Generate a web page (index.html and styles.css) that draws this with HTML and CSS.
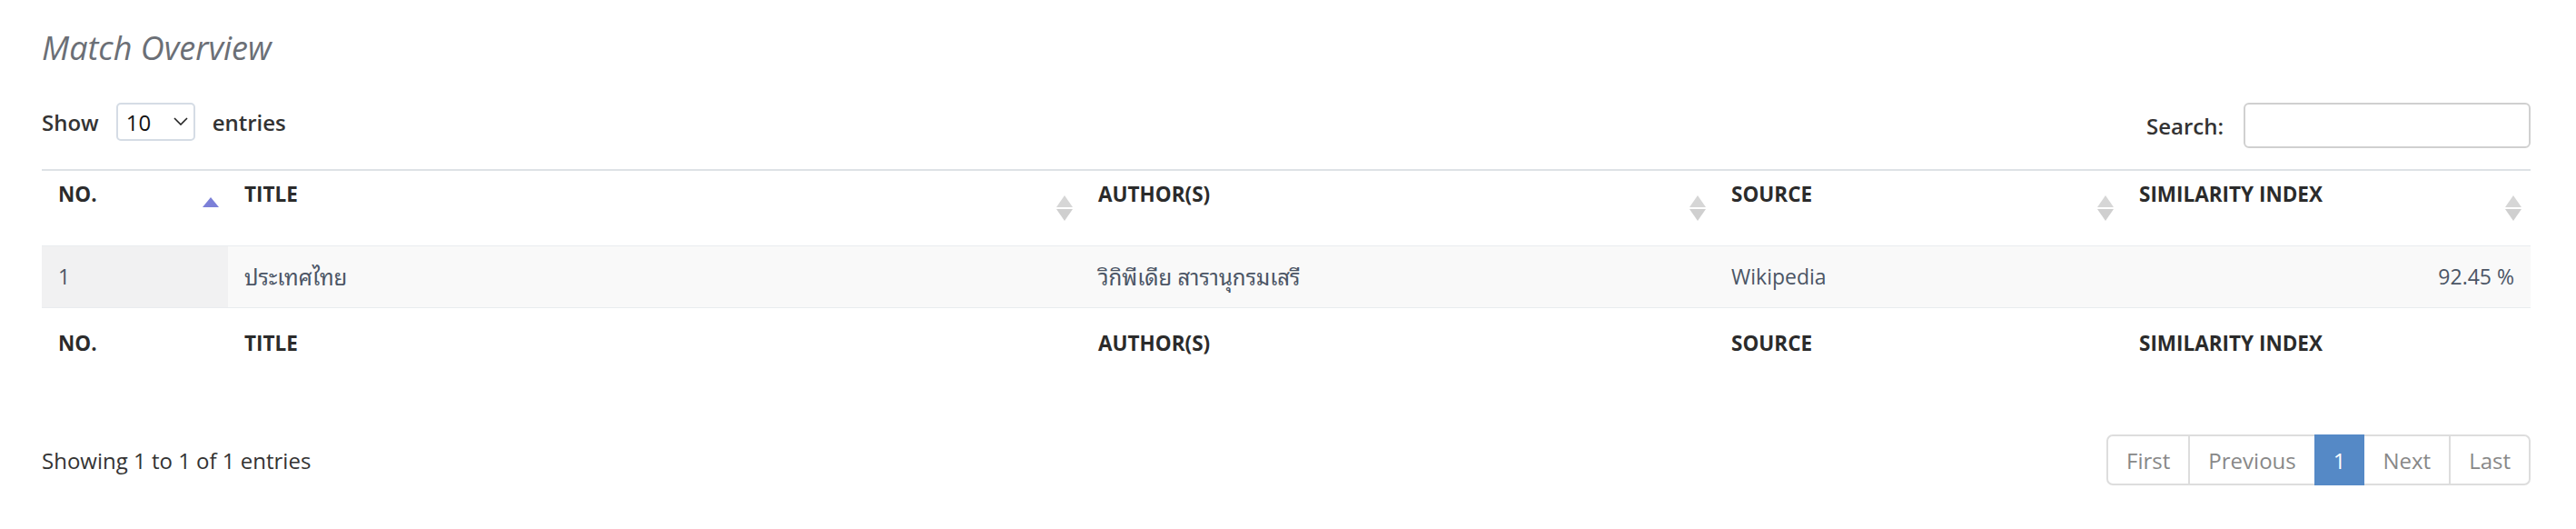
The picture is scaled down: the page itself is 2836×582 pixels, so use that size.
FILE: index.html
```html
<!DOCTYPE html>
<html lang="en">
<head>
<meta charset="utf-8">
<title>Match Overview</title>
<link rel="stylesheet" href="styles.css">
</head>
<body>
<div class="page">
  <h4 class="title">Match Overview</h4>

  <div class="controls">
    <div class="length">
      <span class="label">Show</span>
      <span class="select-wrap">
        <select class="select"><option>10</option><option>25</option><option>50</option><option>100</option></select>
        <svg class="chev" width="16" height="9" viewBox="0 0 16 9"><path d="M1 1 L8 8 L15 1" fill="none" stroke="#222" stroke-width="1.6"/></svg>
      </span>
      <span class="label">entries</span>
    </div>
    <div class="search">
      <span class="label">Search:</span>
      <input class="input" type="search">
    </div>
  </div>

  <table class="grid">
    <colgroup>
      <col class="c-no"><col class="c-title"><col class="c-author"><col class="c-source"><col class="c-sim">
    </colgroup>
    <thead>
      <tr>
        <th class="sortable">NO.<svg class="sort" width="18" height="28" viewBox="0 0 18 28"><polygon points="9,2 18,13 0,13" fill="#7c80d8"/></svg></th>
        <th class="sortable">TITLE<svg class="sort" width="18" height="28" viewBox="0 0 18 28"><polygon points="9,0 18,13 0,13" fill="#d6d6d6"/><polygon points="0,15 18,15 9,28" fill="#cfcfcf"/></svg></th>
        <th class="sortable">AUTHOR(S)<svg class="sort" width="18" height="28" viewBox="0 0 18 28"><polygon points="9,0 18,13 0,13" fill="#d6d6d6"/><polygon points="0,15 18,15 9,28" fill="#cfcfcf"/></svg></th>
        <th class="sortable">SOURCE<svg class="sort" width="18" height="28" viewBox="0 0 18 28"><polygon points="9,0 18,13 0,13" fill="#d6d6d6"/><polygon points="0,15 18,15 9,28" fill="#cfcfcf"/></svg></th>
        <th class="sortable">SIMILARITY INDEX<svg class="sort" width="18" height="28" viewBox="0 0 18 28"><polygon points="9,0 18,13 0,13" fill="#d6d6d6"/><polygon points="0,15 18,15 9,28" fill="#cfcfcf"/></svg></th>
      </tr>
    </thead>
    <tbody>
      <tr>
        <td class="sorted">1</td>
        <td class="thai">ประเทศไทย</td>
        <td class="thai">วิกิพีเดีย สารานุกรมเสรี</td>
        <td>Wikipedia</td>
        <td class="num">92.45 %</td>
      </tr>
    </tbody>
    <tfoot>
      <tr>
        <th>NO.</th>
        <th>TITLE</th>
        <th>AUTHOR(S)</th>
        <th>SOURCE</th>
        <th>SIMILARITY INDEX</th>
      </tr>
    </tfoot>
  </table>

  <div class="bottom">
    <div class="info">Showing 1 to 1 of 1 entries</div>
    <ul class="pager">
      <li class="pg">First</li>
      <li class="pg">Previous</li>
      <li class="pg active">1</li>
      <li class="pg">Next</li>
      <li class="pg">Last</li>
    </ul>
  </div>
</div>
</body>
</html>
```

FILE: styles.css
```css
html, body {
  margin: 0;
  padding: 0;
  background: #ffffff;
}

body {
  font-family: "Open Sans", "Noto Sans Thai Looped", "Loma", "Noto Sans Thai", "Noto Sans", "DejaVu Sans", sans-serif;
  color: #333333;
}

.page {
  padding: 0 50px 0 46px;
}

.title {
  margin: 30px 0 0 0;
  font-size: 36px;
  line-height: 46px;
  font-style: italic;
  font-weight: 400;
  color: #6b6f76;
}

.controls {
  margin-top: 37px;
  display: flex;
  justify-content: space-between;
  align-items: flex-start;
}

.length {
  display: flex;
  align-items: center;
  height: 42px;
  gap: 19px;
}

.search {
  display: flex;
  align-items: center;
  height: 50px;
  gap: 22px;
}

.label {
  font-size: 24px;
  font-weight: 600;
  color: #333333;
  line-height: 33px;
}

.select-wrap {
  position: relative;
  display: block;
  width: 87px;
  height: 42px;
}

.select {
  appearance: none;
  -webkit-appearance: none;
  box-sizing: border-box;
  width: 87px;
  height: 42px;
  margin: 0;
  padding: 0 0 0 9px;
  border: 2px solid #d5dce5;
  border-radius: 5px;
  background: #ffffff;
  font-family: "Open Sans", sans-serif;
  font-size: 24px;
  color: #111111;
}

.chev {
  position: absolute;
  left: 63px;
  top: 16px;
  pointer-events: none;
}

.input {
  box-sizing: border-box;
  width: 316px;
  height: 50px;
  margin: 0;
  border: 2px solid #d0d0d0;
  border-radius: 6px;
  background: #ffffff;
  font-size: 24px;
}

.grid {
  margin-top: 23px;
  width: 2740px;
  table-layout: fixed;
  border-collapse: collapse;
  border-top: 2px solid #dee2e6;
}

.c-no { width: 205px; }
.c-title { width: 940px; }
.c-author { width: 697px; }
.c-source { width: 449px; }
.c-sim { width: 449px; }

.grid th {
  text-align: left;
  font-size: 22.5px;
  font-weight: 700;
  line-height: 33px;
  color: #2b2b2b;
  padding: 0 18px;
  vertical-align: top;
}

.grid thead th {
  position: relative;
  padding-top: 9px;
  padding-bottom: 40px;
  border-bottom: 1px solid #e9ecef;
}

.grid tfoot th {
  padding-top: 22px;
  padding-bottom: 22px;
}

.sort {
  position: absolute;
  right: 10px;
  top: 27px;
}

.grid td {
  font-size: 23px;
  line-height: 33px;
  color: #4b5565;
  padding: 17px 18px;
  background: #f9f9f9;
  border-bottom: 1px solid #e9ecef;
  white-space: nowrap;
}

.grid td.thai {
  font-size: 24px;
}

.grid td.sorted {
  background: #f1f1f2;
}

.grid td.num {
  text-align: right;
}

.bottom {
  margin-top: 62px;
  display: flex;
  justify-content: space-between;
  align-items: center;
}

.info {
  font-size: 24px;
  line-height: 33px;
  color: #333333;
}

.pager {
  display: flex;
  margin: 0;
  padding: 0;
  list-style: none;
  height: 56px;
  box-sizing: border-box;
  border: 2px solid #dddddd;
  border-radius: 7px;
}

.pg {
  display: flex;
  align-items: center;
  padding: 0 20px;
  font-size: 24px;
  color: #888888;
  border-left: 2px solid #dddddd;
}

.pg:first-child {
  border-left: none;
  padding-left: 20px;
}

.pg.active {
  background: #5589c6;
  color: #ffffff;
  margin: -2px 0;
  border-left: none;
  padding: 0 21px;
}

.pg.active + .pg {
  border-left: none;
}
```
